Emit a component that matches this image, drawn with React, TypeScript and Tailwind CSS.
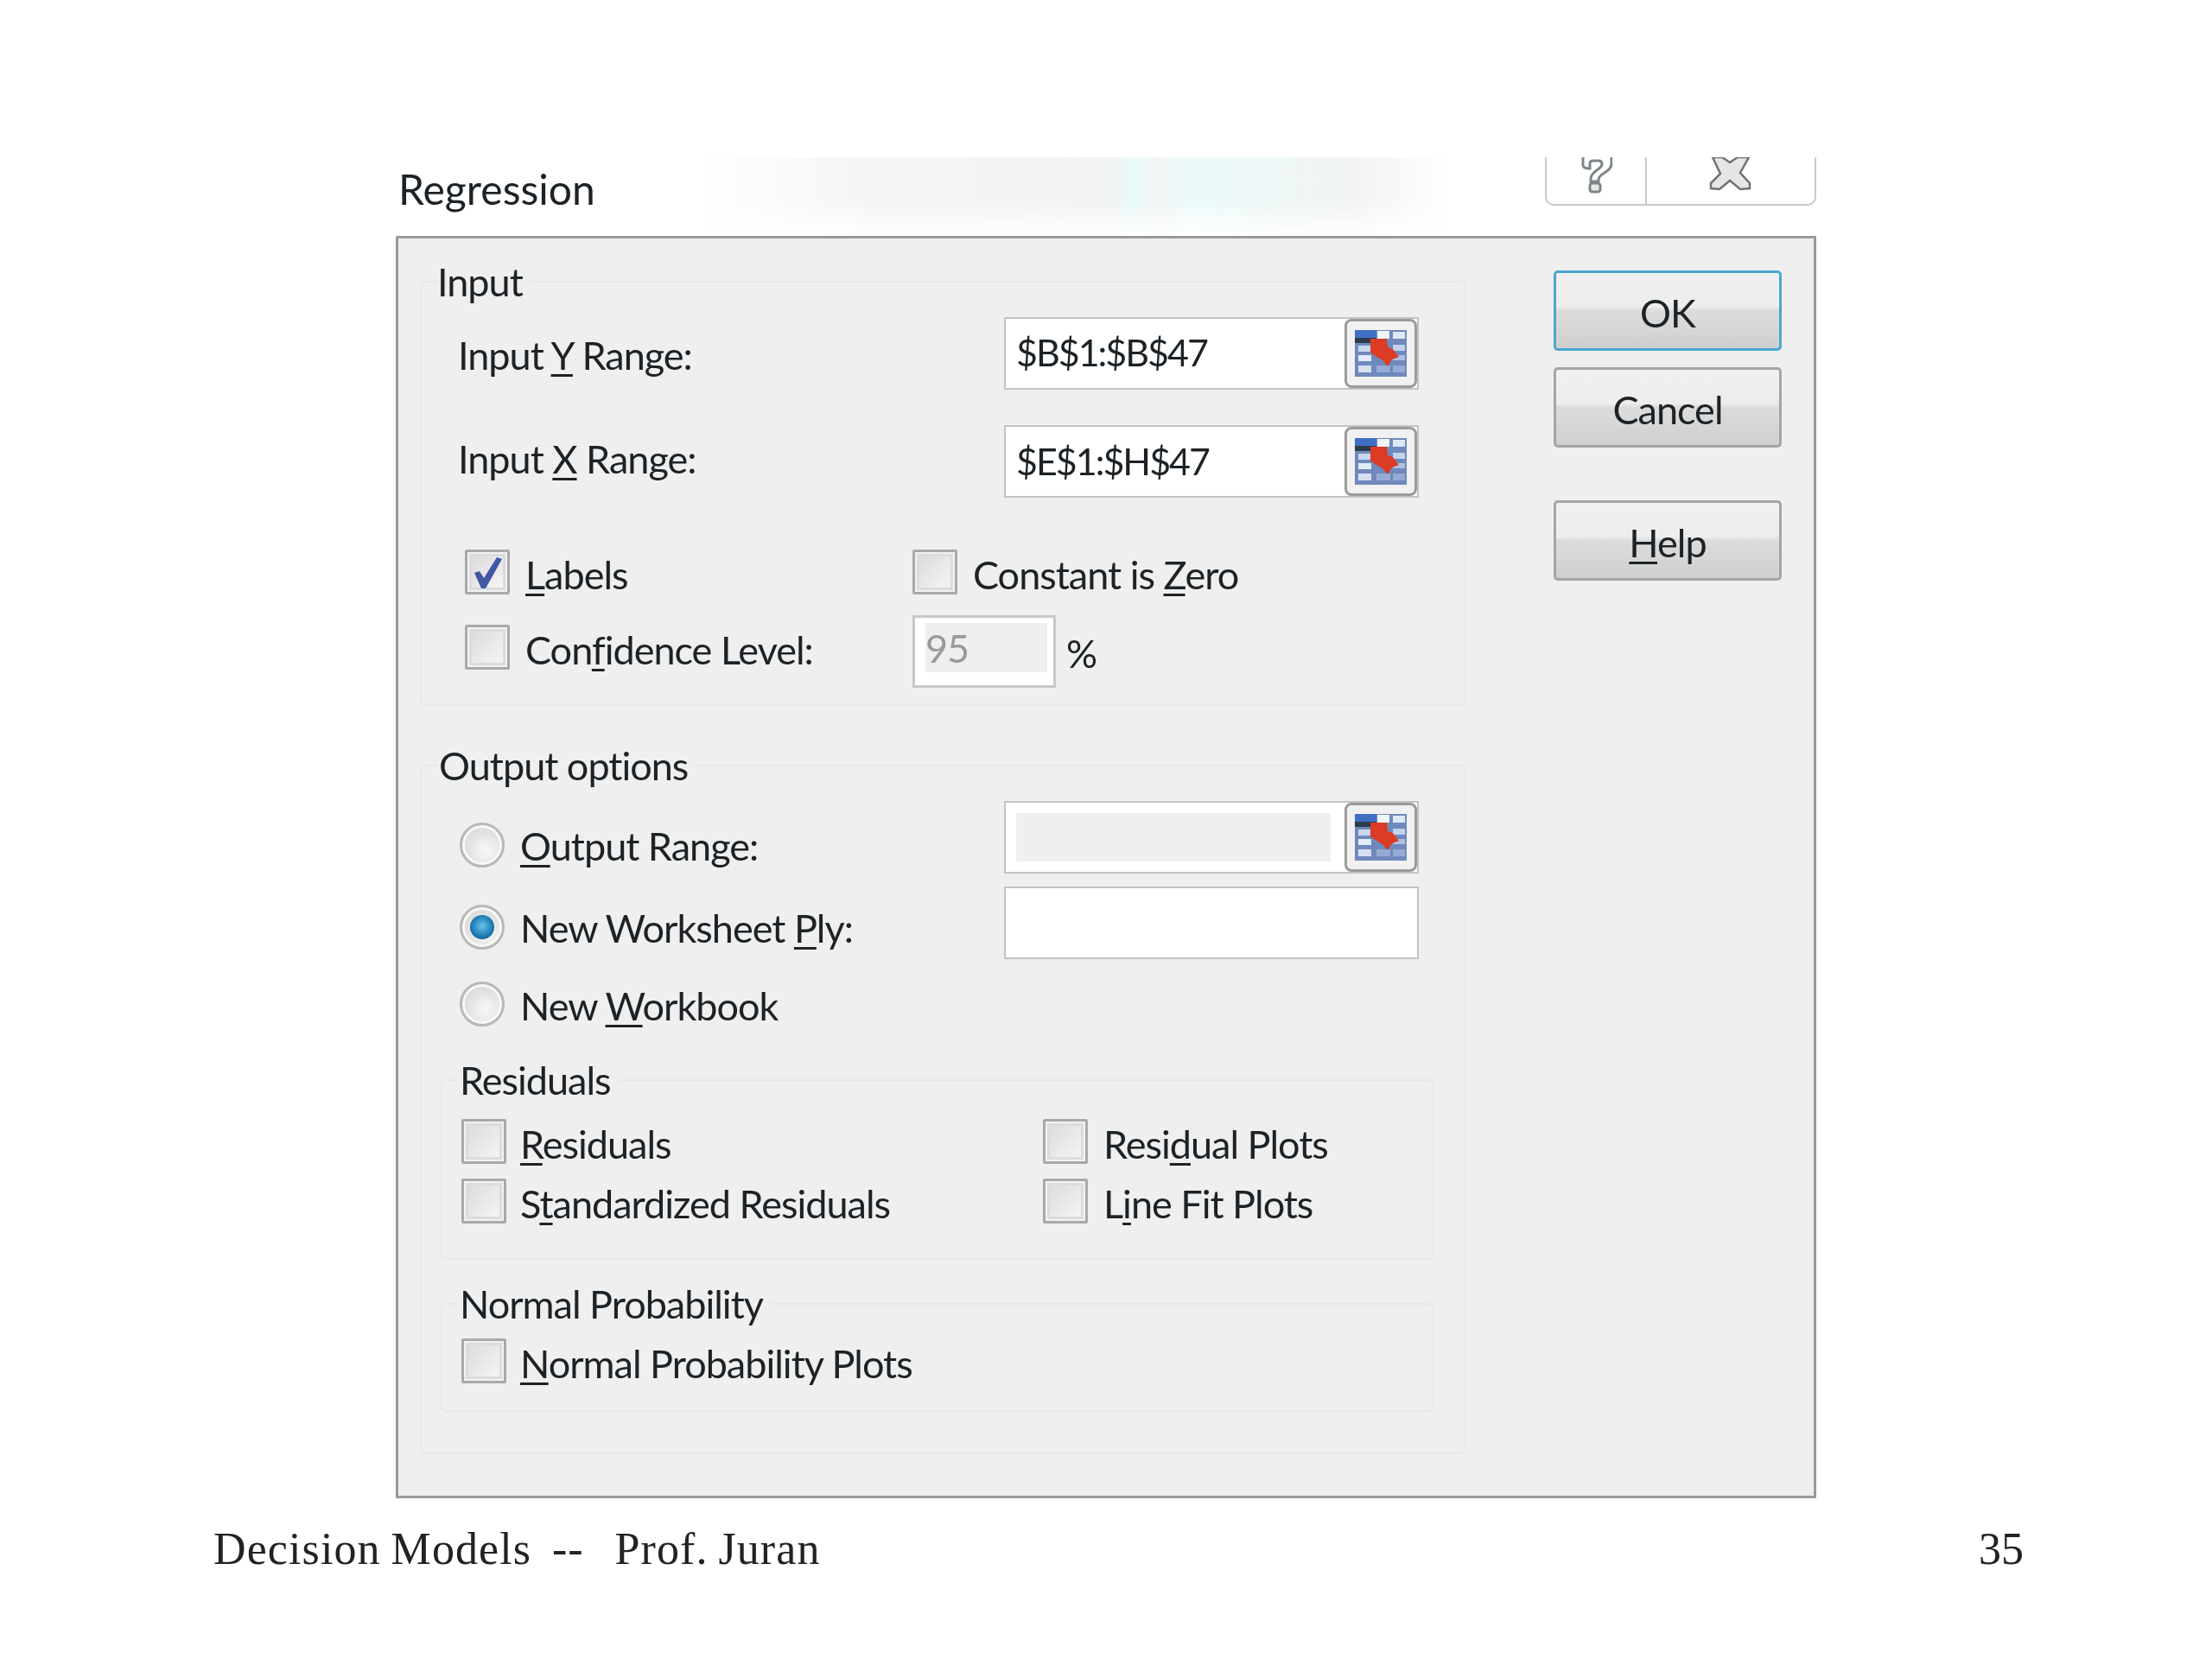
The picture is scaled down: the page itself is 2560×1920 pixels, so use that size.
function U({ children }: { children: React.ReactNode }) {
  return <span className="underline decoration-[3px] underline-offset-[5px]">{children}</span>;
}

function Check({ checked = false }: { checked?: boolean }) {
  return (
    <span className="relative block h-[52px] w-[52px] shrink-0 rounded-[2px] border-[3px] border-[#a9a9a9] bg-[#f2f2f2] p-[2px]">
      <span className="block h-full w-full border-[3px] border-[#dcdcdc] bg-[linear-gradient(135deg,#dcdcdc,#f4f4f4)]" />
      {checked && (
        <svg viewBox="0 0 52 52" className="absolute -left-[3px] -top-[3px] h-[52px] w-[52px]">
          <path d="M11 27 L17 25 L22 33 L37 9 L43 11 L24 45 L19 45 Z" fill="#4257a5" />
        </svg>
      )}
    </span>
  );
}

function Radio({ checked = false }: { checked?: boolean }) {
  return (
    <span className="block h-[52px] w-[52px] shrink-0 rounded-full border-[3px] border-[#b8b8b8] bg-[#f8f8f8] p-[3px]">
      <span className="flex h-full w-full items-center justify-center rounded-full bg-[radial-gradient(circle_at_60%_65%,#f8f8f8,#d2d2d2)]">
        {checked && (
          <span className="block h-[28px] w-[28px] rounded-full bg-[radial-gradient(circle_at_50%_45%,#6cc3ea,#1f7fb8_55%,#0d3d63)]" />
        )}
      </span>
    </span>
  );
}

function RangeButton() {
  return (
    <span className="flex h-full w-[84px] shrink-0 items-center justify-center rounded-[8px] border-[3px] border-[#9b9b9b] bg-[#f1f1f1]">
      <svg viewBox="0 0 60 54" className="h-[54px] w-[60px]">
        <rect width="60" height="54" fill="#6f89bd" />
        <rect width="25" height="9" fill="#3f6fc4" />
        <rect y="9" width="25" height="6" fill="#2f3b4d" />
        <rect x="26" y="1" width="14" height="9" fill="#f0f4fb" />
        <rect x="44" y="2" width="14" height="8" fill="#dfe8f6" />
        <rect x="4" y="18" width="15" height="7" fill="#c9d6ec" />
        <rect x="4" y="29" width="15" height="7" fill="#e3ebf8" />
        <rect x="44" y="17" width="14" height="7" fill="#c4d2ea" />
        <rect x="44" y="29" width="14" height="6" fill="#aebfe0" />
        <rect x="4" y="41" width="15" height="8" fill="#d7e0f1" />
        <rect x="25" y="41" width="16" height="8" fill="#95aad5" />
        <rect x="44" y="41" width="14" height="8" fill="#95aad5" />
        <path d="M18 10 H37 L38 20 L44 22 L51 31 L43 34 L38 42 L32 35 L22 29 L18 26 Z" fill="#dc3b26" />
      </svg>
    </span>
  );
}

function Group({ title, titleLeft, className, children }: { title: string; titleLeft: string; className: string; children?: React.ReactNode }) {
  return (
    <div className={`relative rounded-[6px] border-2 border-[#e6e9e9] ${className}`}>
      <span className={`absolute -top-[23px] bg-[#efefef] pr-2 leading-[44px] ${titleLeft}`}>{title}</span>
      {children}
    </div>
  );
}

function DialogButton({ children, focused = false, className = "" }: { children: React.ReactNode; focused?: boolean; className?: string }) {
  return (
    <div
      className={`flex h-[93px] w-[264px] items-center justify-center rounded-[5px] border-[3px] bg-[linear-gradient(#f0f0f0_0%,#ededed_45%,#dcdcdc_50%,#cfcfcf_100%)] pt-[4px] ${focused ? "border-[#4ba8cf]" : "border-[#a5a5a5]"} ${className}`}
    >
      {children}
    </div>
  );
}

export default function App() {
  return (
    <div className="h-[1920px] w-[2560px] bg-white pl-[247px] pr-[218px] font-['Lato','Open_Sans',sans-serif] text-[45px] leading-[50px] tracking-[-1px] text-[#1c2226] blur-[0.6px]">
      <div className="w-[1855px] pl-[211px]">
        <div className="h-[182px]" />
        <div className="flex h-[91px] w-[1644px]">
          <div className="h-full flex-1 bg-[linear-gradient(180deg,transparent_55%,#ffffff_100%),linear-gradient(90deg,#ffffff_0%,#ffffff_28%,#f4f5f5_43%,#f1f2f2_66%,#e8fafa_67.5%,#f3f4f4_70%,#ebfafa_73%,#f2f3f3_88%,#ffffff_97%)]">
            <span className="mt-[2px] block pl-[3px] text-[48px] leading-[70px] tracking-normal">Regression</span>
          </div>
          <div className="ml-[70px] flex h-[56px] w-[314px] rounded-b-[10px] border-2 border-t-0 border-[#c8c8c8]">
            <div className="flex w-[116px] items-start justify-center border-r-2 border-[#c8c8c8]">
              <svg viewBox="0 0 36 42" className="ml-[2px] h-[42px] w-[36px]">
                <path d="M2 0 V9 Q2 13 10 13 V7 Q10 4 14 4 H20 Q24 4 24 8 Q24 11 18 15 Q11 20 11 25 V28 H20 V26 Q20 22 27 18 Q35 13 35 8 V0" fill="#fff" stroke="#7d8488" strokeWidth="3" />
                <rect x="10" y="30" width="12" height="10" rx="3" fill="#e8e8e8" stroke="#7d8488" strokeWidth="3" />
              </svg>
            </div>
            <div className="flex flex-1 items-start justify-center">
              <svg viewBox="0 0 50 40" className="h-[40px] w-[50px]">
                <path d="M4 0 L15 0 L24 6 L33 0 L46 0 L36 18 L47 30 L47 36 L36 37 L24 27 L12 37 L2 36 L2 30 L13 19 Z" fill="#e6e6e6" stroke="#6e7478" strokeWidth="2.5" />
              </svg>
            </div>
          </div>
        </div>

        <div className="flex h-[1461px] w-[1644px] border-[3px] border-[#9a9a9a] bg-[#efefef] pl-[25px] pr-[37px] pt-[49px]">
          <div className="w-[1212px]">
            <Group title="Input" titleLeft="left-[18px]" className="h-[492px] pl-[42px] pt-[40px]">
              <div className="flex h-[84px] items-center justify-between pr-[52px]">
                <span className="mt-[3px]">Input <U>Y</U> Range:</span>
                <div className="flex h-[84px] w-[480px] items-center justify-between border-2 border-[#c2c2c2] bg-white pl-[12px]">
                  <span className="mb-[2px] text-[43px] tracking-[-2px]">$B$1:$B$47</span>
                  <RangeButton />
                </div>
              </div>
              <div className="mt-[41px] flex h-[84px] items-center justify-between pr-[52px]">
                <span className="mb-[6px]">Input <U>X</U> Range:</span>
                <div className="flex h-[84px] w-[480px] items-center justify-between border-2 border-[#c2c2c2] bg-white pl-[12px]">
                  <span className="text-[43px] tracking-[-2px]">$E$1:$H$47</span>
                  <RangeButton />
                </div>
              </div>
              <div className="mt-[60px] flex h-[52px] items-center pl-[8px]">
                <span className="flex w-[518px] items-center gap-[18px]"><Check checked /><span className="mt-[5px]"><U>L</U>abels</span></span>
                <span className="flex items-center gap-[18px]"><Check /><span className="mt-[5px]">Constant is <U>Z</U>ero</span></span>
              </div>
              <div className="mt-[24px] flex h-[84px] items-center pl-[8px]">
                <span className="mb-[10px] flex w-[518px] items-center gap-[18px]"><Check /><span className="mt-[5px]">Con<U>f</U>idence Level:</span></span>
                <span className="h-[84px] w-[166px] border-[3px] border-[#c8c8c8] bg-white pl-[12px] pt-[6px]">
                  <span className="flex h-[57px] w-[141px] items-center bg-[#efefef] text-[#9a9a9a]">95</span>
                </span>
                <span className="ml-[12px] mt-[4px]">%</span>
              </div>
            </Group>

            <Group title="Output options" titleLeft="left-[20px]" className="mt-[68px] h-[798px] pt-[40px]">
              <div className="flex h-[84px] items-center justify-between pl-[44px] pr-[52px]">
                <span className="mt-[18px] flex items-center gap-[18px]"><Radio /><span className="mt-[2px]"><U>O</U>utput Range:</span></span>
                <div className="flex h-[84px] w-[480px] items-center justify-between border-2 border-[#c2c2c2] bg-white pl-[12px]">
                  <span className="mr-[16px] h-[56px] flex-1 bg-[#efefef]" />
                  <RangeButton />
                </div>
              </div>
              <div className="mt-[15px] flex h-[84px] items-center justify-between pl-[44px] pr-[52px]">
                <span className="mt-[10px] flex items-center gap-[18px]"><Radio checked /><span className="mt-[2px]">New Worksheet <U>P</U>ly:</span></span>
                <div className="h-[84px] w-[480px] border-2 border-[#c2c2c2] bg-white" />
              </div>
              <div className="mt-[26px] flex h-[52px] items-center pl-[44px]">
                <span className="flex items-center gap-[18px]"><Radio /><span className="mt-[3px]">New <U>W</U>orkbook</span></span>
              </div>

              <Group title="Residuals" titleLeft="left-[20px]" className="ml-[22px] mt-[61px] h-[209px] w-[1150px] pl-[22px] pt-[44px]">
                <div className="flex h-[52px] items-center">
                  <span className="flex w-[673px] items-center gap-[16px]"><Check /><span className="mt-[5px]"><U>R</U>esiduals</span></span>
                  <span className="flex items-center gap-[18px]"><Check /><span className="mt-[5px]">Resi<U>d</U>ual Plots</span></span>
                </div>
                <div className="mt-[17px] flex h-[52px] items-center">
                  <span className="flex w-[673px] items-center gap-[16px]"><Check /><span className="mt-[5px]">S<U>t</U>andardized Residuals</span></span>
                  <span className="flex items-center gap-[18px]"><Check /><span className="mt-[5px]">L<U>i</U>ne Fit Plots</span></span>
                </div>
              </Group>

              <Group title="Normal Probability" titleLeft="left-[20px]" className="ml-[22px] mt-[50px] h-[126px] w-[1150px] pl-[22px] pt-[39px]">
                <div className="flex h-[52px] items-center">
                  <span className="flex items-center gap-[16px]"><Check /><span className="mt-[5px]"><U>N</U>ormal Probability Plots</span></span>
                </div>
              </Group>
            </Group>
          </div>

          <div className="ml-[102px] w-[264px]">
            <div className="-mt-[12px]">
              <DialogButton focused>OK</DialogButton>
              <DialogButton className="mt-[19px]">Cancel</DialogButton>
              <DialogButton className="mt-[61px]"><span><U>H</U>elp</span></DialogButton>
            </div>
          </div>
        </div>
      </div>

      <div className="mt-[30px] flex items-center justify-between font-['Liberation_Serif',serif] text-[52px] leading-[58px] tracking-[1.1px] text-[#222] [word-spacing:-2.2px]">
        <span className="whitespace-pre">Decision Models  --   Prof. Juran</span>
        <span className="tracking-normal">35</span>
      </div>
    </div>
  );
}
